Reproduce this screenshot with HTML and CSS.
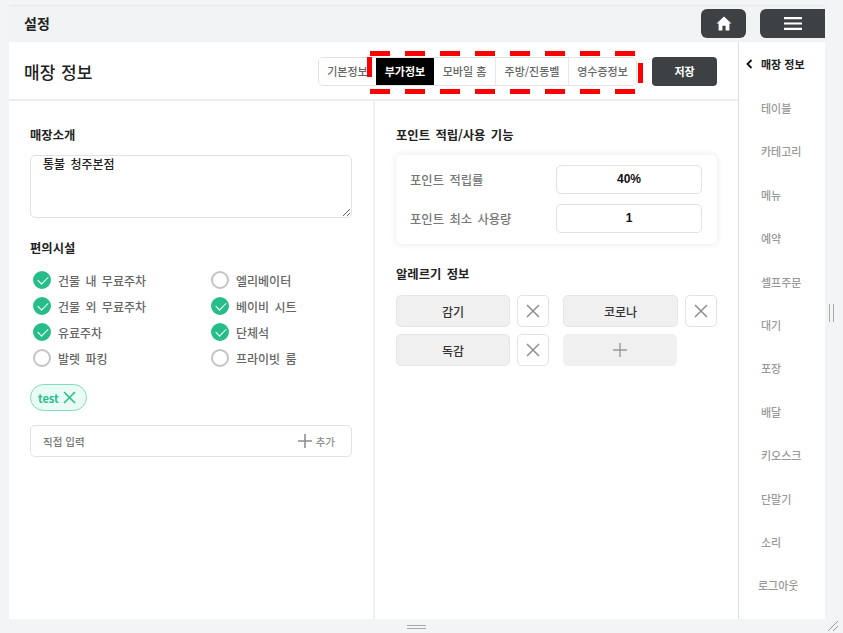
FILE: index.html
```html
<!DOCTYPE html>
<html lang="ko">
<head>
    <meta charset="UTF-8">
    <meta name="viewport" content="width=device-width, initial-scale=1.0">
    <title>설정</title>
    <link rel="stylesheet" href="styles.css">
</head>
<body>
    <div class="window">
        <div class="top-bar">
            <span class="top-title">설정</span>
            <div class="top-buttons">
                <button class="dark-button home-button">
                    <svg width="16" height="15" viewBox="0 0 16 15"><path d="M8 .5 .5 7.5H2.6V14.5H6.4V9.8H9.6V14.5H13.4V7.5H15.5Z" fill="#fff"/></svg>
                </button>
                <button class="dark-button menu-button">
                    <svg width="18" height="13" viewBox="0 0 18 13"><path d="M0 1.2H18M0 6.5H18M0 11.8H18" stroke="#fff" stroke-width="2.2"/></svg>
                </button>
            </div>
        </div>
        <div class="body-row">
            <div class="main">
                <div class="page-head">
                    <h1 class="page-title">매장 정보</h1>
                    <div class="tabs">
                        <button class="tab tab-first">기본정보</button>
                        <button class="tab tab-active">부가정보</button>
                        <button class="tab tab-mobile">모바일 홈</button>
                        <button class="tab tab-kitchen">주방/진동벨</button>
                        <button class="tab tab-receipt">영수증정보</button>
                    </div>
                    <button class="save-button">저장</button>
                </div>
                <div class="columns">
                    <div class="column column-left">
                        <h2 class="section-title">매장소개</h2>
                        <textarea class="intro-box">통불 청주본점</textarea>
                        <h2 class="section-title facility-title">편의시설</h2>
                        <div class="facility-grid">
                            <div class="check-row"><span class="check on"></span>건물 내 무료주차</div>
                            <div class="check-row"><span class="check"></span>엘리베이터</div>
                            <div class="check-row"><span class="check on"></span>건물 외 무료주차</div>
                            <div class="check-row"><span class="check on"></span>베이비 시트</div>
                            <div class="check-row"><span class="check on"></span>유료주차</div>
                            <div class="check-row"><span class="check on"></span>단체석</div>
                            <div class="check-row"><span class="check"></span>발렛 파킹</div>
                            <div class="check-row"><span class="check"></span>프라이빗 룸</div>
                        </div>
                        <div class="tag">test
                            <svg width="13" height="13" viewBox="0 0 13 13"><path d="M1 1 12 12M12 1 1 12" stroke="#27bd8b" stroke-width="1.5"/></svg>
                        </div>
                        <div class="add-row">
                            <span>직접 입력</span>
                            <span class="add-action">
                                <svg width="14" height="14" viewBox="0 0 14 14"><path d="M7 0V14M0 7H14" stroke="#8f8f8f" stroke-width="1.6"/></svg>
                                추가
                            </span>
                        </div>
                    </div>
                    <div class="column column-right">
                        <h2 class="section-title">포인트 적립/사용 기능</h2>
                        <div class="point-card">
                            <div class="point-row">
                                <span>포인트 적립률</span>
                                <div class="point-value">40%</div>
                            </div>
                            <div class="point-row">
                                <span>포인트 최소 사용량</span>
                                <div class="point-value">1</div>
                            </div>
                        </div>
                        <h2 class="section-title allergy-title">알레르기 정보</h2>
                        <div class="allergy-grid">
                            <div class="allergy-pair">
                                <div class="allergy-name">감기</div>
                                <button class="allergy-del"><svg width="14" height="14" viewBox="0 0 14 14"><path d="M1 1 13 13M13 1 1 13" stroke="#8f8f8f" stroke-width="1.5"/></svg></button>
                            </div>
                            <div class="allergy-pair">
                                <div class="allergy-name">코로나</div>
                                <button class="allergy-del"><svg width="14" height="14" viewBox="0 0 14 14"><path d="M1 1 13 13M13 1 1 13" stroke="#8f8f8f" stroke-width="1.5"/></svg></button>
                            </div>
                            <div class="allergy-pair">
                                <div class="allergy-name">독감</div>
                                <button class="allergy-del"><svg width="14" height="14" viewBox="0 0 14 14"><path d="M1 1 13 13M13 1 1 13" stroke="#8f8f8f" stroke-width="1.5"/></svg></button>
                            </div>
                            <div class="allergy-pair">
                                <div class="allergy-name allergy-add"><svg width="14" height="14" viewBox="0 0 14 14"><path d="M7 0V14M0 7H14" stroke="#9a9a9a" stroke-width="1.4"/></svg></div>
                            </div>
                        </div>
                    </div>
                </div>
            </div>
            <div class="side-menu">
                <div class="side-item side-current">
                    <svg class="side-arrow" width="7" height="10" viewBox="0 0 7 10"><path d="M5.5 1 1.5 5 5.5 9" fill="none" stroke="#111" stroke-width="1.8"/></svg>
                    매장 정보
                </div>
                <div class="side-item">테이블</div>
                <div class="side-item">카테고리</div>
                <div class="side-item">메뉴</div>
                <div class="side-item">예약</div>
                <div class="side-item">셀프주문</div>
                <div class="side-item">대기</div>
                <div class="side-item">포장</div>
                <div class="side-item">배달</div>
                <div class="side-item">키오스크</div>
                <div class="side-item">단말기</div>
                <div class="side-item">소리</div>
                <div class="side-item side-logout">로그아웃</div>
            </div>
        </div>
    </div>

    <!-- red dashed annotation over the tabs -->
    <svg class="mark" width="280" height="46" viewBox="0 0 280 46">
        <path d="M3 2.5H271M3 40.5H271" fill="none" stroke="#f00" stroke-width="5" stroke-dasharray="20 15"/>
        <path d="M2.5 6V26M273.5 12V32" fill="none" stroke="#f00" stroke-width="5"/>
    </svg>

    <div class="grip-right"></div>
    <div class="grip-bottom"></div>
    <svg class="grip-corner" width="12" height="12" viewBox="0 0 12 12"><path d="M1 11 11 1M6 11 11 6" stroke="#999" stroke-width="1"/></svg>
</body>
</html>
```
FILE: styles.css
```css
* {
    box-sizing: border-box;
}
html, body {
    height: 100%;
}
body {
    margin: 0;
    overflow: hidden;
    font-family: "Noto Sans CJK KR", "Noto Sans", sans-serif;
    word-spacing: 2px;
    background: #f2f4f5;
}
button {
    font-family: inherit;
    padding: 0;
    cursor: pointer;
}
.window {
    width: 816px;
    height: 614px;
    margin: 5px 0 0 9px;
    display: flex;
    flex-direction: column;
    background: #fff;
}
.top-bar {
    height: 37px;
    flex: none;
    display: flex;
    align-items: center;
    justify-content: space-between;
    padding-left: 15px;
    padding-bottom: 2px;
    background: #f2f3f5;
    border-top: 1px solid #e8e8e8;
    overflow: hidden;
}
.top-title {
    font-size: 14px;
    font-weight: 700;
    color: #222;
}
.top-buttons {
    display: flex;
    gap: 14px;
}
.dark-button {
    height: 29px;
    background: #3e4144;
    border: none;
    border-radius: 6px;
    display: flex;
    align-items: center;
    justify-content: center;
}
.home-button {
    width: 45px;
}
.menu-button {
    width: 65px;
    border-radius: 6px 0 0 6px;
}
.body-row {
    flex: 1;
    display: flex;
    min-height: 0;
}
.main {
    flex: 1;
    display: flex;
    flex-direction: column;
}
.page-head {
    height: 59px;
    flex: none;
    display: flex;
    align-items: center;
    padding: 1px 21px 0 15px;
    border-bottom: 2px solid #eee;
}
.page-title {
    margin: 0 auto 0 0;
    font-size: 17px;
    font-weight: 500;
    word-spacing: 1px;
    color: #222;
}
.tabs {
    display: flex;
    height: 29px;
    border: 1px solid #e2e2e2;
    border-radius: 5px;
    overflow: hidden;
}
.tab {
    height: 100%;
    border: none;
    border-right: 1px solid #e8e8e8;
    background: #fff;
    font-size: 11px;
    font-weight: 500;
    word-spacing: 0;
    color: #666;
}
.tab-first {
    width: 57px;
    border-right: none;
}
.tab-active {
    width: 58px;
    background: #000;
    color: #fff;
    font-weight: 700;
    border-right: none;
}
.tab-mobile {
    width: 62px;
}
.tab-kitchen {
    width: 73px;
}
.tab-receipt {
    width: 67px;
    border-right: none;
}
.save-button {
    width: 65px;
    height: 29px;
    margin-left: 15px;
    background: #3e4144;
    border: none;
    border-radius: 4px;
    font-size: 11px;
    font-weight: 700;
    color: #fff;
}
.columns {
    flex: 1;
    display: flex;
}
.column {
    padding: 26px 21px 0 21px;
}
.column-left {
    width: 366px;
    flex: none;
    border-right: 2px solid #f0f0f0;
}
.column-right {
    flex: 1;
}
.section-title {
    margin: 0;
    font-size: 12.3px;
    line-height: 16px;
    font-weight: 700;
    color: #222;
}
.intro-box {
    display: block;
    width: 100%;
    height: 63px;
    margin: 12px 0 0;
    padding: 0 12px;
    border: 1px solid #e2e2e2;
    border-radius: 5px;
    outline: none;
    resize: vertical;
    font-family: inherit;
    word-spacing: 2px;
    font-size: 12px;
    line-height: 16px;
    font-weight: 500;
    color: #222;
}
.facility-title {
    margin-top: 22px;
}
.facility-grid {
    margin-top: 11px;
    display: grid;
    grid-template-columns: 178px 1fr;
    grid-auto-rows: 26px;
    align-items: center;
}
.check-row {
    display: flex;
    align-items: center;
    gap: 7px;
    padding-left: 3px;
    font-size: 12px;
    font-weight: 500;
    color: #666;
}
.check {
    position: relative;
    width: 18px;
    height: 18px;
    flex: none;
    border: 2px solid #c4c4c4;
    border-radius: 50%;
}
.check.on {
    background: #27bd8b;
    border-color: #27bd8b;
}
.check.on::after {
    content: "";
    position: absolute;
    left: 3px;
    top: 2.5px;
    width: 9px;
    height: 5px;
    border-left: 1.6px solid #fff;
    border-bottom: 1.6px solid #fff;
    transform: rotate(-45deg);
}
.tag {
    display: inline-flex;
    align-items: center;
    gap: 4px;
    height: 27px;
    margin-top: 13px;
    padding: 0 10px 0 7px;
    border: 1px solid #7fddbc;
    border-radius: 14px;
    background: #e9fbf5;
    font-size: 11px;
    font-weight: 700;
    color: #27bd8b;
}
.add-row {
    height: 32px;
    margin-top: 14px;
    padding: 0 16px 0 12px;
    display: flex;
    align-items: center;
    justify-content: space-between;
    border: 1px solid #e2e2e2;
    border-radius: 5px;
    font-size: 10.5px;
    font-weight: 500;
    word-spacing: 0;
    color: #777;
}
.add-action {
    display: flex;
    align-items: center;
    gap: 4px;
    color: #8f8f8f;
}
.point-card {
    height: 89px;
    margin-top: 12px;
    padding: 10px 15px 0 14px;
    display: flex;
    flex-direction: column;
    gap: 10px;
    border-radius: 5px;
    box-shadow: 0 0 6px rgba(0, 0, 0, 0.1);
}
.point-row {
    display: flex;
    align-items: center;
    justify-content: space-between;
    font-size: 12.3px;
    font-weight: 500;
    color: #777;
}
.point-value {
    width: 146px;
    height: 29px;
    border: 1px solid #e2e2e2;
    border-radius: 5px;
    text-align: center;
    font-family: "Liberation Sans", sans-serif;
    font-size: 12px;
    line-height: 27px;
    font-weight: 700;
    color: #111;
}
.allergy-title {
    margin-top: 22px;
}
.allergy-grid {
    margin-top: 13px;
    display: grid;
    grid-template-columns: 153px 154px;
    grid-auto-rows: 32px;
    column-gap: 14px;
    row-gap: 7px;
}
.allergy-pair {
    display: flex;
    gap: 7px;
}
.allergy-name {
    flex: 1;
    display: flex;
    align-items: center;
    justify-content: center;
    background: #f0f0f0;
    border: 1px solid #e6e6e6;
    border-radius: 5px;
    font-size: 12px;
    font-weight: 500;
    color: #333;
}
.allergy-add {
    flex: none;
    width: 114px;
    border: none;
}
.allergy-del {
    width: 32px;
    flex: none;
    display: flex;
    align-items: center;
    justify-content: center;
    background: #fff;
    border: 1px solid #e2e2e2;
    border-radius: 5px;
}
.side-menu {
    width: 87px;
    flex: none;
    padding-top: 1px;
    border-left: 1px solid #ddd;
}
.side-item {
    position: relative;
    height: 43.4px;
    padding-left: 22px;
    display: flex;
    align-items: center;
    font-size: 11px;
    font-weight: 500;
    word-spacing: 0;
    color: #999;
}
.side-current {
    padding-bottom: 2px;
    font-weight: 700;
    color: #222;
}
.side-arrow {
    position: absolute;
    left: 7px;
    top: 16px;
}
.side-logout {
    padding-left: 19px;
}
.mark {
    position: absolute;
    left: 367px;
    top: 51px;
}
.grip-right {
    position: absolute;
    left: 829px;
    top: 304px;
    width: 5px;
    height: 18px;
    border-left: 1px solid #aaa;
    border-right: 1px solid #aaa;
}
.grip-bottom {
    position: absolute;
    left: 407px;
    top: 625px;
    width: 19px;
    height: 4px;
    border-top: 1px solid #aaa;
    border-bottom: 1px solid #aaa;
}
.grip-corner {
    position: absolute;
    left: 827px;
    top: 620px;
}
```
